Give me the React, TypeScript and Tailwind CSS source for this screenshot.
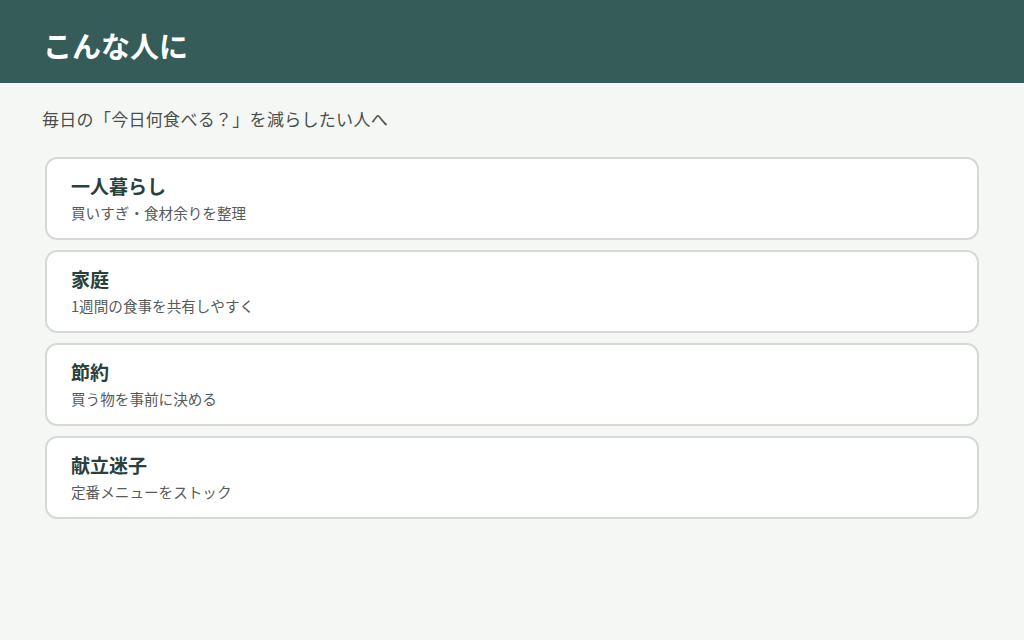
const items = [
  { title: "一人暮らし", desc: "買いすぎ・食材余りを整理" },
  { title: "家庭", desc: "1週間の食事を共有しやすく" },
  { title: "節約", desc: "買う物を事前に決める" },
  { title: "献立迷子", desc: "定番メニューをストック" },
]

export default function App() {
  return (
    <div
      className="min-h-[640px] w-full bg-[#f5f7f5]"
      style={{ fontFamily: '"Noto Sans CJK JP", "Noto Sans", sans-serif' }}
    >
      {/* Header */}
      <header className="flex h-[83px] items-center bg-[#355c58] px-[43px] pt-[8px]">
        <h1 className="text-[29px] font-bold leading-none text-white">こんな人に</h1>
      </header>

      <main className="px-[42px] pt-[24px]">
        <p className="text-[17px] leading-[24px] tracking-[0.3px] text-[#4a4f4d]">
          毎日の「今日何食べる？」を減らしたい人へ
        </p>

        <div className="mt-[26px] flex flex-col gap-[10px] px-[3px]">
          {items.map((item) => (
            <div
              key={item.title}
              className="flex h-[83px] flex-col justify-center rounded-[12px] border-2 border-[#d5dad7] bg-white px-[24px] pb-[2px]"
            >
              <h2 className="text-[19px] font-bold leading-[26px] text-[#29403c]">{item.title}</h2>
              <p className="mt-[4px] text-[14.6px] leading-[20px] text-[#565b59]">{item.desc}</p>
            </div>
          ))}
        </div>
      </main>
    </div>
  )
}
